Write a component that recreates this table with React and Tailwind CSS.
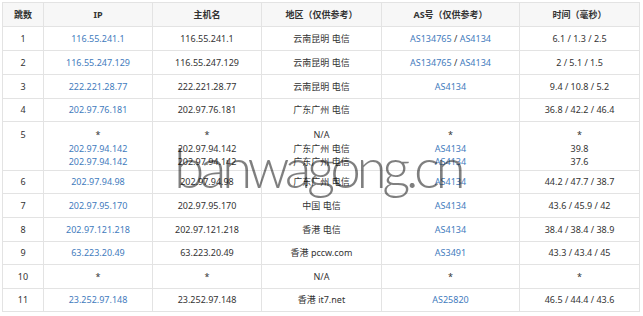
import React from 'react';

const hops = [
  { n: '1', ip: ['116.55.241.1'], host: ['116.55.241.1'], loc: ['云南昆明 电信'], as: [['AS134765', 'AS4134']], time: ['6.1 / 1.3 / 2.5'] },
  { n: '2', ip: ['116.55.247.129'], host: ['116.55.247.129'], loc: ['云南昆明 电信'], as: [['AS134765', 'AS4134']], time: ['2 / 5.1 / 1.5'] },
  { n: '3', ip: ['222.221.28.77'], host: ['222.221.28.77'], loc: ['云南昆明 电信'], as: [['AS4134']], time: ['9.4 / 10.8 / 5.2'] },
  { n: '4', ip: ['202.97.76.181'], host: ['202.97.76.181'], loc: ['广东广州 电信'], as: [[]], time: ['36.8 / 42.2 / 46.4'] },
  {
    n: '5',
    ip: ['*', '202.97.94.142', '202.97.94.142'],
    host: ['*', '202.97.94.142', '202.97.94.142'],
    loc: ['N/A', '广东广州 电信', '广东广州 电信'],
    as: [null, ['AS4134'], ['AS4134']],
    time: ['*', '39.8', '37.6'],
    multi: true,
  },
  { n: '6', ip: ['202.97.94.98'], host: ['202.97.94.98'], loc: ['广东广州 电信'], as: [['AS4134']], time: ['44.2 / 47.7 / 38.7'] },
  { n: '7', ip: ['202.97.95.170'], host: ['202.97.95.170'], loc: ['中国 电信'], as: [['AS4134']], time: ['43.6 / 45.9 / 42'] },
  { n: '8', ip: ['202.97.121.218'], host: ['202.97.121.218'], loc: ['香港 电信'], as: [['AS4134']], time: ['38.4 / 38.4 / 38.9'] },
  { n: '9', ip: ['63.223.20.49'], host: ['63.223.20.49'], loc: ['香港 pccw.com'], as: [['AS3491']], time: ['43.3 / 43.4 / 45'] },
  { n: '10', ip: ['*'], host: ['*'], loc: ['N/A'], as: [null], time: ['*'] },
  { n: '11', ip: ['23.252.97.148'], host: ['23.252.97.148'], loc: ['香港 it7.net'], as: [['AS25820']], time: ['46.5 / 44.4 / 43.6'] },
];

const heights = ['h-[24px]', 'h-[24px]', 'h-[24px]', 'h-[23px]', 'h-[49px]', 'h-[23px]', 'h-[24px]', 'h-[24px]', 'h-[23px]', 'h-[24px]', 'h-[23px]'];

const link = 'text-[#3f7bbd]';

const AsCell = ({ list }) => {
  if (list === null) return <span>*</span>;
  return list.map((a, i) => (
    <React.Fragment key={a}>
      {i > 0 && <span> / </span>}
      <span className={link}>{a}</span>
    </React.Fragment>
  ));
};

const App = () => {
  const td = 'border border-[#e3e3e3] text-center px-1';
  return (
    <div className="relative w-[643px] h-[316px] bg-white pt-[2px] pl-[2px] overflow-hidden" style={{ fontFamily: '"Noto Sans", "Noto Sans CJK SC", sans-serif' }}>
      <table className="table-fixed border-collapse w-[637px] text-[9px] leading-[13.5px] text-[#333]">
        <colgroup>
          <col className="w-[41px]" />
          <col className="w-[109px]" />
          <col className="w-[109px]" />
          <col className="w-[120px]" />
          <col className="w-[138px]" />
          <col className="w-[120px]" />
        </colgroup>
        <thead>
          <tr className="h-[24px] bg-[#f7f7f7] font-bold">
            <th className={td}>跳数</th>
            <th className={td}>IP</th>
            <th className={td}>主机名</th>
            <th className={td}>地区（仅供参考）</th>
            <th className={td}>AS号（仅供参考）</th>
            <th className={td}>时间（毫秒）</th>
          </tr>
        </thead>
        <tbody>
          {hops.map((h, r) => (
            <tr key={h.n} className={`${heights[r]} ${h.multi ? 'align-top' : 'align-middle'}`}>
              <td className={`${td} ${h.multi ? 'pt-[6px]' : ''}`}>{h.n}</td>
              <td className={`${td} ${h.multi ? 'pt-[6px]' : ''}`}>
                {h.ip.map((v, i) => (
                  <div key={i} className={v === '*' ? '' : link}>{v}</div>
                ))}
              </td>
              <td className={`${td} ${h.multi ? 'pt-[6px]' : ''}`}>
                {h.host.map((v, i) => <div key={i}>{v}</div>)}
              </td>
              <td className={`${td} ${h.multi ? 'pt-[6px]' : ''}`}>
                {h.loc.map((v, i) => <div key={i}>{v}</div>)}
              </td>
              <td className={`${td} ${h.multi ? 'pt-[6px]' : ''}`}>
                {h.as.map((v, i) => <div key={i}><AsCell list={v} /></div>)}
              </td>
              <td className={`${td} ${h.multi ? 'pt-[6px]' : ''}`}>
                {h.time.map((v, i) => <div key={i}>{v}</div>)}
              </td>
            </tr>
          ))}
        </tbody>
      </table>
      {/* watermark over the table */}
      <div
        className="absolute left-[174px] top-[140px] text-[55px] leading-none font-light tracking-[-4.5px] text-black/50 pointer-events-none select-none"
        style={{ fontFamily: 'Lato, "Open Sans", sans-serif' }}
      >
        banwagong.cn
      </div>
    </div>
  );
};

export default App;
